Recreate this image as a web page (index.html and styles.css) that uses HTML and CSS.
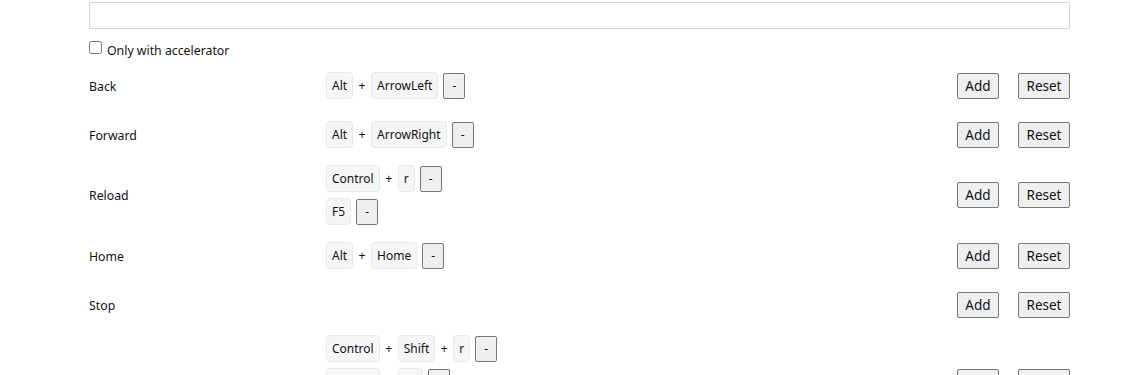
FILE: index.html
```html
<!DOCTYPE html>
<html>
<head>
<meta charset="utf-8">
<link rel="stylesheet" href="styles.css">
</head>
<body>
<div class="page">
  <input class="search" type="text">
  <label class="filter"><input type="checkbox"><span>Only with accelerator</span></label>

  <div class="row">
    <div class="name">Back</div>
    <div class="keys">
      <div class="combo"><kbd>Alt</kbd><span class="plus">+</span><kbd>ArrowLeft</kbd><button class="del">-</button></div>
    </div>
    <div class="actions"><button>Add</button><button>Reset</button></div>
  </div>

  <div class="row">
    <div class="name">Forward</div>
    <div class="keys">
      <div class="combo"><kbd>Alt</kbd><span class="plus">+</span><kbd>ArrowRight</kbd><button class="del">-</button></div>
    </div>
    <div class="actions"><button>Add</button><button>Reset</button></div>
  </div>

  <div class="row">
    <div class="name">Reload</div>
    <div class="keys">
      <div class="combo"><kbd>Control</kbd><span class="plus">+</span><kbd>r</kbd><button class="del">-</button></div>
      <div class="combo"><kbd>F5</kbd><button class="del">-</button></div>
    </div>
    <div class="actions"><button>Add</button><button>Reset</button></div>
  </div>

  <div class="row">
    <div class="name">Home</div>
    <div class="keys">
      <div class="combo"><kbd>Alt</kbd><span class="plus">+</span><kbd>Home</kbd><button class="del">-</button></div>
    </div>
    <div class="actions"><button>Add</button><button>Reset</button></div>
  </div>

  <div class="row">
    <div class="name">Stop</div>
    <div class="keys"></div>
    <div class="actions"><button>Add</button><button>Reset</button></div>
  </div>

  <div class="row">
    <div class="name">Hard reload</div>
    <div class="keys">
      <div class="combo"><kbd>Control</kbd><span class="plus">+</span><kbd>Shift</kbd><span class="plus">+</span><kbd>r</kbd><button class="del">-</button></div>
      <div class="combo"><kbd>Control</kbd><span class="plus">+</span><kbd>F5</kbd><button class="del">-</button></div>
      <div class="combo"><kbd>Shift</kbd><span class="plus">+</span><kbd>F5</kbd><button class="del">-</button></div>
    </div>
    <div class="actions"><button>Add</button><button>Reset</button></div>
  </div>
</div>
</body>
</html>
```
FILE: styles.css
```css
html, body {
  margin: 0;
  padding: 0;
  background: #fff;
}
body {
  font-family: "Noto Sans", "Liberation Sans", sans-serif;
  font-size: 12.3px;
  color: #111;
}
.page {
  width: 981px;
  margin-left: 89px;
  padding-top: 2px;
}
.search {
  display: block;
  box-sizing: border-box;
  width: 981px;
  height: 27px;
  margin: 0;
  border: 1px solid #d4d4d4;
  border-radius: 1px;
  background: #fff;
}
.filter {
  display: flex;
  align-items: flex-start;
  margin-top: 10px;
  height: 22px;
  gap: 5px;
}
.filter input {
  margin: 2px 0 0 0;
  width: 13px;
  height: 13px;
}
.filter span {
  margin-top: 3px;
  line-height: 17px;
}
.row {
  display: grid;
  grid-template-columns: 237px 1fr auto;
  align-items: center;
  box-sizing: border-box;
  min-height: 49px;
  padding: 6px 0;
}
.name {
  padding-top: 1px;
}
.keys {
  display: flex;
  flex-direction: column;
  gap: 6px;
}
.combo {
  display: flex;
  align-items: center;
  height: 27px;
}
kbd {
  font-family: inherit;
  font-size: 12px;
  line-height: 17px;
  box-sizing: border-box;
  height: 27px;
  padding: 4px 5px;
  background: #f5f6f8;
  border: 1px solid #e6e8ec;
  border-radius: 4px;
}
.plus {
  width: 18px;
  text-align: center;
}
button {
  font-family: inherit;
  font-size: 13.5px;
  line-height: 16px;
  box-sizing: border-box;
  height: 26px;
  padding: 4px 7.5px;
  margin: 0;
  background: #efefef;
  border: 1px solid #767676;
  border-radius: 2px;
  color: #111;
}
.del {
  width: 22px;
  padding: 0;
  margin-left: 5px;
  font-size: 12px;
}
.actions {
  display: flex;
  gap: 19px;
}
```
